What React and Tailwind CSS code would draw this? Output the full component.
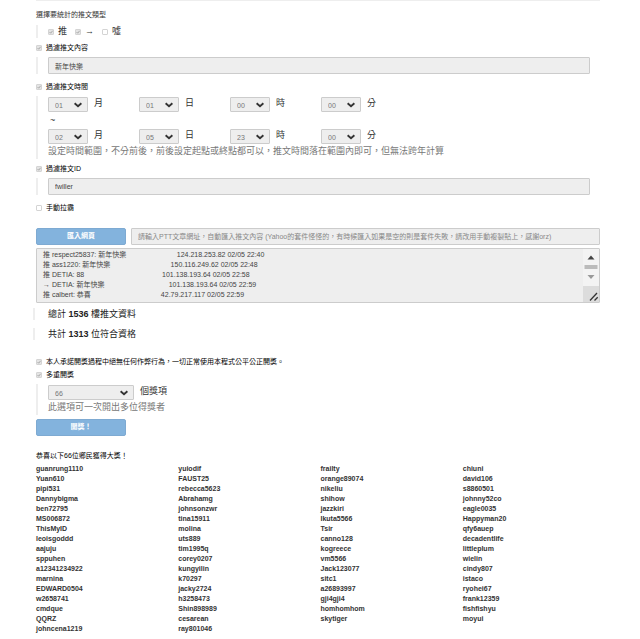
import React, { useState } from 'react';

const months = ['01', '02', '03', '04', '05', '06', '07', '08', '09', '10', '11', '12'];
const days = Array.from({ length: 31 }, (_, i) => String(i + 1).padStart(2, '0'));
const hours = Array.from({ length: 24 }, (_, i) => String(i).padStart(2, '0'));
const minutes = Array.from({ length: 60 }, (_, i) => String(i).padStart(2, '0'));
const prizeCounts = Array.from({ length: 100 }, (_, i) => String(i + 1));

const comments = [
  ['推 respect25837: 新年快樂', 26, '124.218.253.82 02/05 22:40'],
  ['推 ass1220: 新年快樂', 31, '150.116.249.62 02/05 22:48'],
  ['推 DETIA: 88', 40, '101.138.193.64 02/05 22:58'],
  ['→ DETIA: 新年快樂', 33, '101.138.193.64 02/05 22:59'],
  ['推 calbert: 恭喜', 36, '42.79.217.117 02/05 22:59'],
];

const commentText = comments
  .map(([text, pad, tail]) => text + ' '.repeat(pad) + tail)
  .join('\n');

const winners = [
  ['guanrung1110', 'yuiodif', 'frailty', 'chiuni'],
  ['Yuan610', 'FAUST25', 'orange89074', 'david106'],
  ['pipi531', 'rebecca5623', 'nikeliu', 's8860501'],
  ['Dannybigma', 'Abrahamg', 'shihow', 'johnny52co'],
  ['ben72795', 'johnsonzwr', 'jazzkiri', 'eagle0035'],
  ['MS006872', 'tina15911', 'Ikuta5566', 'Happyman20'],
  ['ThisMyID', 'molina', 'Tsir', 'qfy6auep'],
  ['leoisgoddd', 'uts889', 'canno128', 'decadentlife'],
  ['aajuju', 'tim1995q', 'kogreece', 'littleplum'],
  ['sppuhen', 'corey0207', 'vm5566', 'wielin'],
  ['a12341234922', 'kungyilin', 'Jack123077', 'cindy807'],
  ['marnina', 'k70297', 'sitc1', 'istaco'],
  ['EDWARD0504', 'jacky2724', 'a26893997', 'ryohei67'],
  ['w2658741', 'h3258473', 'gji4gji4', 'frank12359'],
  ['cmdque', 'Shin898989', 'homhomhom', 'fishfishyu'],
  ['QQRZ', 'cesarean', 'skytiger', 'moyui'],
  ['johncena1219', 'ray801046'],
];

const Tick = ({ id, defaultChecked }) => (
  <span className="relative flex w-1.5 h-1.5 shrink-0">
    <input
      id={id}
      type="checkbox"
      defaultChecked={defaultChecked}
      className="peer appearance-none w-1.5 h-1.5 border border-[#d4d4d4] rounded-[1px] bg-white checked:bg-[#e4e4e4]"
    />
    <svg className="absolute inset-0 w-1.5 h-1.5 hidden peer-checked:block pointer-events-none" viewBox="0 0 6 6" fill="none" stroke="#aaa">
      <path d="M1.5 3l1.2 1.2L4.6 1.8" />
    </svg>
  </span>
);

const CheckRow = ({ id, label, checked }) => (
  <div className="flex items-center gap-1 text-[7px] leading-[10px] text-black">
    <Tick id={id} defaultChecked={checked} />
    <label htmlFor={id}>{label}</label>
  </div>
);

const InlineCheck = ({ id, label, checked }) => (
  <div className="flex items-center gap-1">
    <Tick id={id} defaultChecked={checked} />
    <label htmlFor={id}>{label}</label>
  </div>
);

const Group = ({ children }) => (
  <div className="mt-1 pl-2.5 pr-2.5 border-l-2 border-[#eee]">{children}</div>
);

const Select = ({ id, options, value, label, wide }) => (
  <div className="flex items-center gap-1.5 text-[9px] leading-[15px] text-[#333]">
    <div className={wide ? 'relative w-[86px] h-[15px]' : 'relative w-10 h-[15px]'}>
      <select
        id={id}
        defaultValue={value}
        className="block appearance-none w-full h-full pl-1.5 border border-[#ccc] rounded-[1px] bg-[#eee] text-[7px] text-[#777]"
      >
        {options.map((o) => (
          <option key={o}>{o}</option>
        ))}
      </select>
      <svg className="absolute right-1.5 top-1 w-2 h-2 pointer-events-none" viewBox="0 0 8 8" fill="none" stroke="#333" strokeWidth="1.9">
        <path d="M0.6 2.2L4 5.2l3.4-3" />
      </svg>
    </div>
    <label htmlFor={id} className="pb-0.5 leading-[11px]">{label}</label>
  </div>
);

const TimeRow = ({ name, values }) => (
  <div className="grid grid-cols-6 gap-x-1">
    <Select id={`${name}-month`} options={months} value={values[0]} label="月" />
    <Select id={`${name}-day`} options={days} value={values[1]} label="日" />
    <Select id={`${name}-hour`} options={hours} value={values[2]} label="時" />
    <Select id={`${name}-minute`} options={minutes} value={values[3]} label="分" />
  </div>
);

const TextField = (props) => (
  <input
    type="text"
    className="block w-full h-[17px] px-1.5 border border-[#ccc] rounded-[1px] bg-[#eee] text-[7px] text-[#444] placeholder:text-[#888]"
    {...props}
  />
);

const Button = ({ children }) => (
  <button
    type="button"
    className="block w-[90px] h-[17px] shrink-0 rounded-[2px] border border-[#7eaad2] bg-[#83b3dd] text-[7px] font-bold text-white"
  >
    {children}
  </button>
);

const Stat = ({ before, count, after }) => (
  <p className="-ml-[3px] pl-[13px] border-l-2 border-[#eee] text-[9px] leading-3 text-[#222]">
    {before} <strong>{count}</strong> {after}
  </p>
);

export default function App() {
  const [log, setLog] = useState(commentText);

  return (
    <main className="pl-9 pr-10 bg-white font-['Liberation_Sans','Noto_Sans_CJK_TC',sans-serif]">
      <form className="border-t border-[#eee] pt-2">
        {/* Filters */}
        <h2 className="text-[7px] leading-3 text-[#333]">選擇要統計的推文類型</h2>
        <Group>
          <div className="flex gap-2 h-[13px] text-[9px] leading-[13px] text-[#333]">
            <InlineCheck id="type-push" label="推" checked />
            <InlineCheck id="type-arrow" label="→" checked />
            <InlineCheck id="type-boo" label="噓" />
          </div>
        </Group>

        <div className="mt-[5px]">
          <CheckRow id="by-content" label="過濾推文內容" checked />
        </div>
        <Group>
          <TextField aria-label="推文內容" defaultValue="新年快樂" />
        </Group>

        <div className="mt-2">
          <CheckRow id="by-time" label="過濾推文時間" checked />
        </div>
        <Group>
          <div className="pt-px">
            <TimeRow name="from" values={['01', '01', '00', '00']} />
            <p className="pl-0.5 text-[9px] leading-[17px] text-[#333]">~</p>
            <TimeRow name="to" values={['02', '05', '23', '00']} />
            <p className="text-[9px] leading-[15px] text-[#777] whitespace-nowrap">
              設定時間範圍，不分前後，前後設定起點或終點都可以，推文時間落在範圍內即可，但無法跨年計算
            </p>
          </div>
        </Group>

        <div className="mt-[5px]">
          <CheckRow id="by-id" label="過濾推文ID" checked />
        </div>
        <Group>
          <TextField aria-label="推文ID" defaultValue="fwiller" />
        </Group>

        <div className="mt-2">
          <CheckRow id="manual" label="手動拉霸" />
        </div>

        {/* Import */}
        <div className="flex gap-[5px] mt-[15px]">
          <Button>匯入網頁</Button>
          <TextField
            aria-label="文章網址"
            placeholder="請輸入PTT文章網址，自動匯入推文內容 (Yahoo的套件怪怪的，有時候匯入如果是空的則是套件失敗，請改用手動複製貼上，感謝orz)"
          />
        </div>
        <div className="flex mt-[3px] h-[55px] border border-[#ccc] rounded-[1px] bg-[#eee]">
          <textarea
            aria-label="推文資料"
            value={log}
            onChange={(e) => setLog(e.target.value)}
            className="flex-1 px-1.5 py-px resize-none overflow-hidden text-[7px] leading-[10px] text-[#444]"
          />
          <div className="flex flex-col justify-between w-4 bg-[#f3f3f3]">
            <svg className="w-4 h-9" viewBox="0 0 16 36">
              <path d="M4.5 10.5h7L8 6.5z" fill="#444" />
              <rect x="1.5" y="16" width="13" height="4" fill="#bbb" />
              <path d="M4.5 26h7L8 30z" fill="#999" />
            </svg>
            <svg className="w-4 h-4 bg-[#dcdcdc]" viewBox="0 0 16 16" fill="none" stroke="#333" strokeWidth="1.3">
              <path d="M7 14.5l7-7.5M11.5 14.5l3.2-3.2" />
            </svg>
          </div>
        </div>
        <div className="flex flex-col gap-2 mt-[5px]">
          <Stat before="總計" count={1536} after="樓推文資料" />
          <Stat before="共計" count={1313} after="位符合資格" />
        </div>

        {/* Draw */}
        <div className="flex flex-col gap-[3px] mt-[17px]">
          <CheckRow id="promise" label="本人承諾開獎過程中絕無任何作弊行為，一切正常使用本程式公平公正開獎。" checked />
          <CheckRow id="multi" label="多重開獎" checked />
        </div>
        <Group>
          <div className="pt-px">
            <Select id="prizes" options={prizeCounts} value="66" label="個獎項" wide />
            <p className="text-[9px] leading-[15px] text-[#777]">此選項可一次開出多位得獎者</p>
          </div>
        </Group>
        <div className="mt-1">
          <Button>開獎！</Button>
        </div>
      </form>

      {/* Winners */}
      <section className="mt-[15px] text-[7px] leading-[10px]">
        <h2 className="text-black">恭喜以下66位鄉民獲得大獎！</h2>
        <ul className="grid grid-cols-4 gap-x-[5px] mt-[3px] font-bold text-[#333]">
          {winners.flat().map((name) => (
            <li key={name}>{name}</li>
          ))}
        </ul>
      </section>
    </main>
  );
}
